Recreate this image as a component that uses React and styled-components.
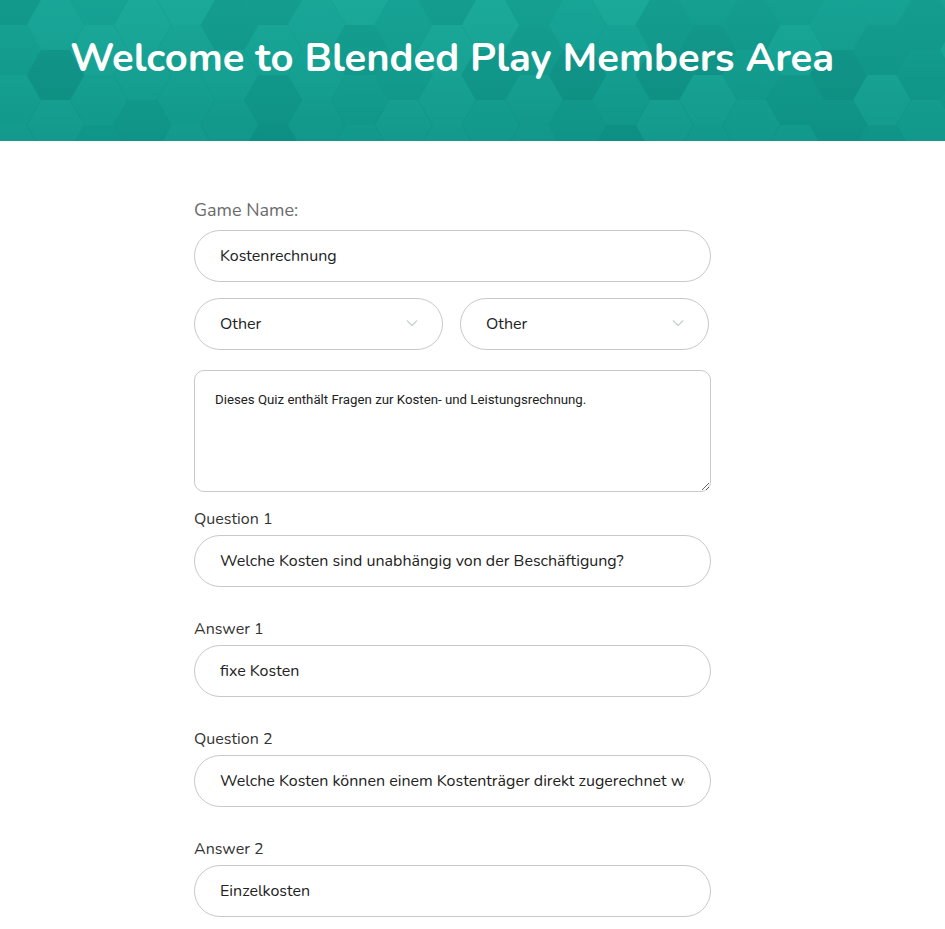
import React from 'react';
import styled, { createGlobalStyle } from 'styled-components';

// --- Constants ---
const HEX_W = 57;
const HEX_H = 50;
const HEX_COLORS = ['#139e90', '#16a596', '#10978a', '#19a798', '#0f9285', '#14a193', '#119a8c', '#17a395'];

const QUESTIONS = [
  { q: 'Welche Kosten sind unabhängig von der Beschäftigung?', a: 'fixe Kosten' },
  { q: 'Welche Kosten können einem Kostenträger direkt zugerechnet werden?', a: 'Einzelkosten' },
];

const GlobalStyle = createGlobalStyle`
  body { margin: 0; background: #fff; font-family: 'Nunito', 'Open Sans', sans-serif; }
  * { box-sizing: border-box; }
`;

// --- Styled Components ---
const Header = styled.header`
  position: relative; height: 141px; overflow: hidden; background: #129c8e;
  display: flex; align-items: flex-start; padding: 33px 0 0 70px;
`;

const HexLayer = styled.svg` position: absolute; inset: 0; `;

const Title = styled.h1`
  position: relative; margin: 0; color: #fff; font-family: 'Nunito', 'Open Sans', sans-serif;
  font-weight: 700; font-size: 40px; line-height: 50px;
`;

const Form = styled.form`
  width: 517px; margin-left: 194px; padding: 58px 0 40px;
  display: flex; flex-direction: column;
`;

const Label = styled.label`
  display: block; font-size: ${p => p.muted ? '18px' : '16px'};
  line-height: ${p => p.muted ? '22px' : '20px'};
  color: ${p => p.muted ? '#6b6b6b' : '#333'}; margin-bottom: ${p => p.muted ? '9px' : '6px'};
`;

const TextInput = styled.input`
  width: 100%; height: 52px; border: 1px solid #c9c9c9; border-radius: 26px;
  padding: 0 25px; font-family: inherit; font-size: 16px; color: #222; background: #fff;
  outline: none;
`;

const SelectRow = styled.div`
  display: grid; grid-template-columns: 249px 249px; gap: 17px; margin: 16px 0 20px;
`;

const SelectWrap = styled.div` position: relative; `;

const Select = styled.select`
  width: 100%; height: 52px; border: 1px solid #c9c9c9; border-radius: 26px;
  padding: 0 25px; font-family: inherit; font-size: 16px; color: #222; background: #fff;
  appearance: none; outline: none;
`;

const Chevron = styled.svg`
  position: absolute; right: 25px; top: 21px; pointer-events: none;
`;

const Description = styled.textarea`
  width: 100%; height: 122px; border: 1px solid #c9c9c9; border-radius: 10px;
  padding: 21px 20px; font-family: Roboto, 'Liberation Sans', sans-serif; font-size: 13.25px;
  color: #222; resize: vertical; outline: none; margin-bottom: 17px;
`;

const Field = styled.div` margin-bottom: ${p => p.last ? '0' : '32px'}; `;

function HexBackground() {
  const hexes = [];
  let seed = 7;
  const rand = () => { seed = (seed * 9301 + 49297) % 233280; return seed / 233280; };
  for (let c = 0; c < 24; c++) {
    const cx = 12 + c * 43.5;
    for (let r = -1; r < 5; r++) {
      const cy = r * HEX_H + (c % 2 ? 25 : 0);
      const pts = [
        [cx - HEX_W / 2, cy], [cx - HEX_W / 4, cy - HEX_H / 2], [cx + HEX_W / 4, cy - HEX_H / 2],
        [cx + HEX_W / 2, cy], [cx + HEX_W / 4, cy + HEX_H / 2], [cx - HEX_W / 4, cy + HEX_H / 2],
      ].map(p => p.join(',')).join(' ');
      const color = HEX_COLORS[Math.floor(rand() * HEX_COLORS.length)];
      hexes.push(<polygon key={`${c}-${r}`} points={pts} fill={color} />);
    }
  }
  return (
    <HexLayer width="945" height="141" viewBox="0 0 945 141">
      <defs>
        <linearGradient id="shade" x1="0" y1="0" x2="0" y2="1">
          <stop offset="0" stopColor="#1fb0a0" stopOpacity="0.25" />
          <stop offset="1" stopColor="#067a70" stopOpacity="0.3" />
        </linearGradient>
      </defs>
      {hexes}
      <rect width="945" height="141" fill="url(#shade)" />
    </HexLayer>
  );
}

function Dropdown({ value }) {
  return (
    <SelectWrap>
      <Select defaultValue={value}>
        <option>{value}</option>
      </Select>
      <Chevron width="12" height="8" viewBox="0 0 12 8">
        <path d="M1 1.5 L6 6.5 L11 1.5" fill="none" stroke="#c7d2d2" strokeWidth="1.3" />
      </Chevron>
    </SelectWrap>
  );
}

// --- Main App Component ---
export default function App() {
  return (
    <>
      <GlobalStyle />
      <Header>
        <HexBackground />
        <Title>Welcome to Blended Play Members Area</Title>
      </Header>

      <Form onSubmit={e => e.preventDefault()}>
        <Label muted>Game Name:</Label>
        <TextInput readOnly value="Kostenrechnung" />

        <SelectRow>
          <Dropdown value="Other" />
          <Dropdown value="Other" />
        </SelectRow>

        <Description readOnly defaultValue="Dieses Quiz enthält Fragen zur Kosten- und Leistungsrechnung." />

        {QUESTIONS.map((item, i) => (
          <React.Fragment key={i}>
            <Field>
              <Label>Question {i + 1}</Label>
              <TextInput readOnly value={item.q} />
            </Field>
            <Field last={i === QUESTIONS.length - 1}>
              <Label>Answer {i + 1}</Label>
              <TextInput readOnly value={item.a} />
            </Field>
          </React.Fragment>
        ))}
      </Form>
    </>
  );
}
